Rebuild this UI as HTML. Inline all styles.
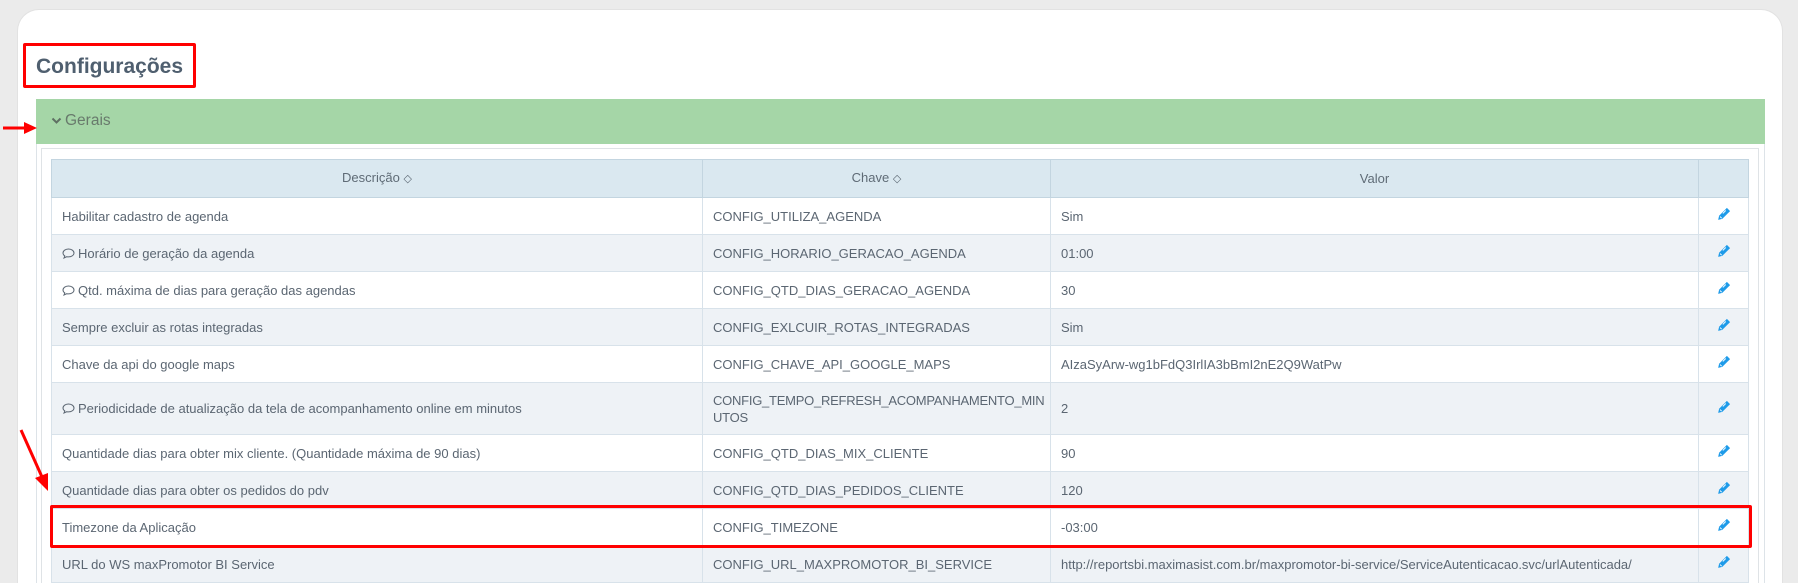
<!DOCTYPE html>
<html><head><meta charset="utf-8"><style>
*{margin:0;padding:0;box-sizing:border-box}
html,body{width:1798px;height:583px;overflow:hidden}
body{background:#ebebeb;font-family:"Liberation Sans",sans-serif;position:relative}
.card{position:absolute;left:17px;top:9px;width:1766px;height:574px;background:#fff;border-radius:22px 22px 0 0;border:1px solid #e2e2e2;border-bottom:none}
.title{position:absolute;left:23px;top:43px;width:173px;height:45px;border:3px solid #f00;border-radius:2px}
.title span{position:absolute;left:10px;top:9px;font-size:21px;font-weight:bold;color:#4f5f6f}
.panel{position:absolute;left:36px;top:99px;width:1729px;height:484px;border-left:1px solid #dde3e8;border-right:1px solid #dde3e8}
.green{position:absolute;left:36px;top:99px;width:1729px;height:45px;background:#a5d6a7}
.green span{position:absolute;left:29px;top:13px;font-size:15.5px;color:#687a6c}
.inner{position:absolute;left:41px;top:148px;width:1718px;height:435px;border:1px solid #dfe3e6;border-bottom:none}
.tw{position:absolute;left:50px;top:158px;width:1700px;height:425px;overflow:hidden;padding:1px}
table{width:1697px;border-collapse:collapse;font-size:13px;color:#5b6672;table-layout:fixed}
td,th{border:1px solid #d8e2ea;padding:0 10px;text-align:left;font-weight:normal;line-height:17px;white-space:nowrap;overflow:hidden}
th{background:#dae8f0;border-color:#c3d5e0;height:38px;text-align:center;color:#5f6b76}
tr{height:37px}
tr:nth-child(odd) td{background:#eef2f6}
td.e{text-align:center;padding:0}
.r{position:absolute;left:50px;top:505px;width:1702px;height:43px;border:3px solid #f00;border-radius:2px}
.c{display:inline-block;width:13px;height:11px;vertical-align:-1px;margin-right:3px}
</style></head><body>
<svg width="0" height="0" style="position:absolute"><defs>
<symbol id="p" viewBox="0 0 12 12"><path d="M8.5 0.8L11.2 3.5L4.5 10.2L1 11L1.8 7.5Z" fill="#1e9be9"/><path d="M2.6 8.2L4 9.6M7.5 3L5 5.5" stroke="#fff" stroke-width="0.8"/></symbol>
<symbol id="b" viewBox="0 0 13 11"><path d="M6.5 1C3.4 1 1 2.8 1 5C1 6.2 1.7 7.2 2.8 7.9L2 10L4.8 8.7C5.3 8.8 5.9 8.9 6.5 8.9C9.6 8.9 12 7.1 12 5C12 2.8 9.6 1 6.5 1Z" fill="none" stroke="#5b6672" stroke-width="1"/></symbol>
</defs></svg>
<div class="card"></div>
<div class="title"><span>Configurações</span></div>
<div class="panel"></div>
<div class="green"><svg style="position:absolute;left:15px;top:18px" width="11" height="8" viewBox="0 0 11 8"><path d="M1.5 1.5L5.5 5.5L9.5 1.5" stroke="#5f7063" stroke-width="2" fill="none"/></svg><span>Gerais</span></div>
<div class="inner"></div>
<svg style="position:absolute;left:0;top:0" width="60" height="583">
<path d="M3 128H26" stroke="#f00" stroke-width="3"/><path d="M24 122L37 128L24 134Z" fill="#f00"/>
<path d="M21 430L42 477" stroke="#f00" stroke-width="3"/><path d="M35 478L48 491L48 473Z" fill="#f00"/>
</svg>
<div class="tw"><table>
<colgroup><col style="width:651px"><col style="width:348px"><col style="width:648px"><col style="width:50px"></colgroup>
<tr><th>Descrição <span style="font-size:11px">◇</span></th><th>Chave <span style="font-size:11px">◇</span></th><th>Valor</th><th></th></tr>
<tr><td>Habilitar cadastro de agenda</td><td>CONFIG_UTILIZA_AGENDA</td><td>Sim</td><td class="e"><svg width="14" height="14"><use href="#p"/></svg></td></tr>
<tr><td><svg class="c"><use href="#b"/></svg>Horário de geração da agenda</td><td>CONFIG_HORARIO_GERACAO_AGENDA</td><td>01:00</td><td class="e"><svg width="14" height="14"><use href="#p"/></svg></td></tr>
<tr><td><svg class="c"><use href="#b"/></svg>Qtd. máxima de dias para geração das agendas</td><td>CONFIG_QTD_DIAS_GERACAO_AGENDA</td><td>30</td><td class="e"><svg width="14" height="14"><use href="#p"/></svg></td></tr>
<tr><td>Sempre excluir as rotas integradas</td><td>CONFIG_EXLCUIR_ROTAS_INTEGRADAS</td><td>Sim</td><td class="e"><svg width="14" height="14"><use href="#p"/></svg></td></tr>
<tr><td>Chave da api do google maps</td><td>CONFIG_CHAVE_API_GOOGLE_MAPS</td><td>AIzaSyArw-wg1bFdQ3IrlIA3bBmI2nE2Q9WatPw</td><td class="e"><svg width="14" height="14"><use href="#p"/></svg></td></tr>
<tr style="height:52px"><td><svg class="c"><use href="#b"/></svg>Periodicidade de atualização da tela de acompanhamento online em minutos</td><td style="letter-spacing:-0.25px">CONFIG_TEMPO_REFRESH_ACOMPANHAMENTO_MIN<br>UTOS</td><td>2</td><td class="e"><svg width="14" height="14"><use href="#p"/></svg></td></tr>
<tr><td>Quantidade dias para obter mix cliente. (Quantidade máxima de 90 dias)</td><td>CONFIG_QTD_DIAS_MIX_CLIENTE</td><td>90</td><td class="e"><svg width="14" height="14"><use href="#p"/></svg></td></tr>
<tr><td>Quantidade dias para obter os pedidos do pdv</td><td>CONFIG_QTD_DIAS_PEDIDOS_CLIENTE</td><td>120</td><td class="e"><svg width="14" height="14"><use href="#p"/></svg></td></tr>
<tr><td>Timezone da Aplicação</td><td>CONFIG_TIMEZONE</td><td>-03:00</td><td class="e"><svg width="14" height="14"><use href="#p"/></svg></td></tr>
<tr><td>URL do WS maxPromotor BI Service</td><td>CONFIG_URL_MAXPROMOTOR_BI_SERVICE</td><td>http://reportsbi.maximasist.com.br/maxpromotor-bi-service/ServiceAutenticacao.svc/urlAutenticada/</td><td class="e"><svg width="14" height="14"><use href="#p"/></svg></td></tr>
</table></div>
<div class="r"></div>
</body></html>
